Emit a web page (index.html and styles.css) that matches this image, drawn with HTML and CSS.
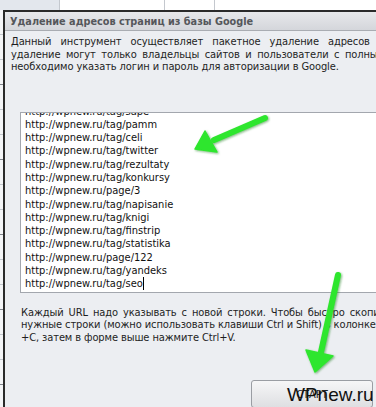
FILE: index.html
```html
<!DOCTYPE html>
<html lang="ru">
<head>
<meta charset="utf-8">
<title>Удаление адресов страниц из базы Google</title>
<link rel="stylesheet" href="styles.css">
</head>
<body>
<div class="screen">
  <div class="backdrop-top">
    <div class="bcell bcell-a"></div>
    <div class="bcell bcell-b"></div>
    <div class="bcell bcell-c"></div>
    <div class="bcell bcell-d"></div>
  </div>
  <div class="main-row">
    <div class="left-strip">
      <div class="lrow"></div>
      <div class="lrow"></div>
      <div class="lrow"></div>
      <div class="lrow"></div>
      <div class="lrow"></div>
      <div class="lrow"></div>
      <div class="lrow"></div>
      <div class="lrow"></div>
      <div class="lrow"></div>
      <div class="lrow"></div>
      <div class="lrow"></div>
      <div class="lrow"></div>
      <div class="lrow"></div>
      <div class="lrow"></div>
      <div class="lrow"></div>
      <div class="lrow"></div>
    </div>
    <div class="dialog">
      <div class="titlebar">Удаление адресов страниц из базы Google</div>
      <div class="content">
        <p class="intro">
          <span class="line sp-wide">Данный инструмент осуществляет пакетное удаление адресов страниц из индекса Google.</span>
          <span class="line sp-mid">удаление могут только владельцы сайтов и пользователи с полными правами. Для этого</span>
          <span class="line">необходимо указать логин и пароль для авторизации в Google.</span>
        </p>
        <div class="form">
          <div class="textarea">
            <div class="lines">
              <div>http://wpnew.ru/tag/sape</div>
              <div>http://wpnew.ru/tag/pamm</div>
              <div>http://wpnew.ru/tag/celi</div>
              <div>http://wpnew.ru/tag/twitter</div>
              <div>http://wpnew.ru/tag/rezultaty</div>
              <div>http://wpnew.ru/tag/konkursy</div>
              <div>http://wpnew.ru/page/3</div>
              <div>http://wpnew.ru/tag/napisanie</div>
              <div>http://wpnew.ru/tag/knigi</div>
              <div>http://wpnew.ru/tag/finstrip</div>
              <div>http://wpnew.ru/tag/statistika</div>
              <div>http://wpnew.ru/page/122</div>
              <div>http://wpnew.ru/tag/yandeks</div>
              <div>http://wpnew.ru/tag/seo<span class="caret"></span></div>
            </div>
          </div>
          <p class="hint">
            <span class="line sp-hint">Каждый URL надо указывать с новой строки. Чтобы быстро скопировать</span>
            <span class="line">нужные строки (можно использовать клавиши Ctrl и Shift) в колонке URL и нажмите Ctrl</span>
            <span class="line">+C, затем в форме выше нажмите Ctrl+V.</span>
          </p>
          <div class="actions">
            <button class="start" type="button">СТАРТ</button>
          </div>
        </div>
      </div>
    </div>
  </div>

  <svg class="arrows" width="376" height="407" viewBox="0 0 376 407" aria-hidden="true">
    <defs>
      <filter id="sh" x="-20%" y="-20%" width="140%" height="140%">
        <feGaussianBlur in="SourceAlpha" stdDeviation="1"/>
        <feOffset dx="1" dy="1" result="b"/>
        <feFlood flood-color="#1a7a1a" flood-opacity="0.55"/>
        <feComposite in2="b" operator="in"/>
        <feMerge><feMergeNode/><feMergeNode in="SourceGraphic"/></feMerge>
      </filter>
    </defs>
    <g filter="url(#sh)" fill="#2ee62e" stroke="#2ee62e" stroke-linejoin="round">
      <line x1="265" y1="118" x2="214" y2="140" stroke-width="6" stroke-linecap="round"/>
      <polygon points="195,149 205,131 217,152" stroke-width="1.5"/>
      <line x1="338" y1="275" x2="321" y2="352" stroke-width="6" stroke-linecap="round"/>
      <polygon points="315,372 306,350 333,356" stroke-width="1.5"/>
    </g>
  </svg>
  <div class="watermark">WPnew.ru</div>
</div>
</body>
</html>
```

FILE: styles.css
```css
html, body {
  margin: 0;
  padding: 0;
  background: #ffffff;
}

.screen {
  position: relative;
  width: 376px;
  height: 407px;
  overflow: hidden;
  font-family: "DejaVu Sans Condensed", "DejaVu Sans", sans-serif;
  font-stretch: condensed;
  font-size: 11px;
  color: #1e1e1e;
}

.backdrop-top {
  display: flex;
  height: 10px;
}

.bcell {
  flex: 0 0 auto;
  border-right: 1px solid #c4c8ce;
}

.bcell-a { width: 59px; background: #e3e7ed; }
.bcell-b { width: 104px; }
.bcell-c { width: 49px; }
.bcell-d { flex: 1 1 auto; border-right: 0; }

.main-row {
  display: flex;
  align-items: flex-start;
}

.left-strip {
  flex: 0 0 3px;
  width: 3px;
  background: #f4f5f7;
}

.lrow {
  height: 24px;
  border-bottom: 1px solid #c3c7cd;
}

.lrow:nth-child(3n) {
  border-bottom-color: #80848b;
}

.dialog {
  flex: 0 0 auto;
  width: 480px;
  height: 420px;
  border-top: 2px solid #2a2a2a;
  border-left: 2px solid #2a2a2a;
  background: #eceef2;
}

.titlebar {
  height: 18px;
  line-height: 19px;
  padding-left: 5px;
  background: linear-gradient(#e7e8eb, #d4d6db);
  border-bottom: 1px solid #a9acb2;
  font-weight: bold;
  font-size: 10.8px;
  color: #55575b;
  white-space: nowrap;
}

.content {
  padding: 5px 0 0 6px;
}

.intro,
.hint {
  margin: 0;
  line-height: 12.5px;
  white-space: nowrap;
  letter-spacing: -0.1px;
}

.line {
  display: block;
}

.sp-wide {
  word-spacing: 6px;
}

.sp-mid {
  word-spacing: 2.5px;
}

.sp-hint {
  word-spacing: 2px;
}

.form {
  margin-top: 38px;
  padding-left: 9px;
}

.textarea {
  height: 179px;
  width: 440px;
  background: #ffffff;
  border: 1px solid #a3a7ae;
  overflow: hidden;
}

.lines {
  margin-top: -8px;
  padding-left: 4px;
  line-height: 13.3px;
  color: #111;
}

.caret {
  display: inline-block;
  width: 1px;
  height: 13px;
  background: #000;
  vertical-align: -3px;
}

.hint {
  margin-top: 14px;
  padding-left: 1px;
}

.actions {
  margin-top: 36px;
  padding-left: 231px;
}

.start {
  display: block;
  width: 122px;
  height: 28px;
  padding: 0;
  border: 1px solid #9a9da3;
  border-radius: 3px;
  background: linear-gradient(#f6f6f7, #dedfe2);
  font-family: "DejaVu Sans Condensed", "DejaVu Sans", sans-serif;
  font-size: 11px;
  color: #222;
}

.arrows {
  position: absolute;
  left: 0;
  top: 0;
  pointer-events: none;
}

.watermark {
  position: absolute;
  left: 287px;
  top: 385px;
  font-family: "Liberation Sans", Arial, sans-serif;
  font-size: 19px;
  line-height: 20px;
  color: #111;
}
```
